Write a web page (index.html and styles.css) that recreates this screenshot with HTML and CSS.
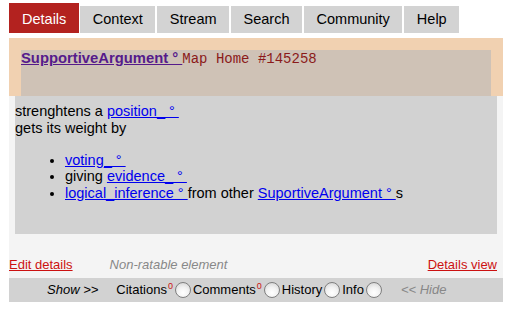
FILE: index.html
```html
<!DOCTYPE html>
<html>
<head>
<meta charset="utf-8">
<link rel="stylesheet" href="styles.css">
</head>
<body>
<div class="page">
  <div class="tabs">
    <div class="tab active">Details</div>
    <div class="tab">Context</div>
    <div class="tab">Stream</div>
    <div class="tab">Search</div>
    <div class="tab">Community</div>
    <div class="tab">Help</div>
  </div>
  <div class="header">
    <div class="header-inner">
      <a class="title" href="#">SupportiveArgument °&nbsp;</a><span class="mono">Map Home #145258</span>
    </div>
  </div>
  <div class="body">
    <div class="content">
      <div>strenghtens a <a class="lnk" href="#">position_ °&nbsp;</a></div>
      <div>gets its weight by</div>
      <ul class="list">
        <li><a class="lnk" href="#">voting_ °&nbsp;</a></li>
        <li>giving <a class="lnk" href="#">evidence_ °&nbsp;</a></li>
        <li><a class="lnk" href="#">logical_inference °&nbsp;</a>from other <a class="lnk" href="#">SuportiveArgument °&nbsp;</a>s</li>
      </ul>
    </div>
    <div class="links">
      <a class="red" href="#">Edit details</a>
      <span class="note">Non-ratable element</span>
      <a class="red right" href="#">Details view</a>
    </div>
  </div>
  <div class="bar">
    <span class="show">Show &gt;&gt;</span>
    <span class="item">Citations<sup>0</sup></span><span class="radio"></span>
    <span class="item">Comments<sup>0</sup></span><span class="radio"></span>
    <span class="item">History</span><span class="radio"></span>
    <span class="item">Info</span><span class="radio"></span>
    <span class="hide">&lt;&lt; Hide</span>
  </div>
</div>
</body>
</html>
```

FILE: styles.css
```css
html, body {
  margin: 0;
  padding: 0;
  background: #ffffff;
}
body {
  font-family: "Liberation Sans", Arial, Helvetica, sans-serif;
  font-size: 14.5px;
  line-height: 16.5px;
  color: #000;
}
.page {
  width: 494px;
  padding: 3px 0 0 9px;
}
.tabs {
  display: flex;
  align-items: flex-end;
  gap: 2px;
  height: 30px;
}
.tab {
  height: 27px;
  line-height: 27px;
  padding: 0 12.5px;
  background: #d3d3d3;
  color: #000;
}
.tab.active {
  height: 27px;
  padding: 3px 13px 0;
  background: #b3221f;
  color: #fff;
  margin-right: -1px;
}
.header {
  margin-top: 5px;
  background: #f1d1b1;
  padding: 12px 12px 0 12px;
}
.header-inner {
  height: 46px;
  background: #cfc2b6;
  line-height: 17px;
}
.title {
  font-weight: bold;
  font-size: 14.8px;
  color: #551a8b;
  text-decoration: underline;
}
.mono {
  font-family: "Liberation Mono", "Courier New", monospace;
  font-size: 14px;
  color: #8b1a1a;
}
.body {
  background: #f4f4f4;
}
.content {
  margin: 0 6px;
  background: #d2d2d2;
  height: 138px;
  box-sizing: border-box;
  padding-top: 7px;
}
.lnk {
  color: #0000ee;
  text-decoration: underline;
}
.list {
  margin: 15.5px 0 0 0;
  padding-left: 50px;
}
.links {
  display: flex;
  align-items: baseline;
  font-size: 13px;
  height: 17px;
  line-height: 17px;
  padding: 22px 6px 5px 0;
}
.red {
  color: #cc1111;
  text-decoration: underline;
}
.note {
  color: #888;
  font-style: italic;
  margin-left: 37px;
}
.right {
  margin-left: auto;
}
.bar {
  display: flex;
  align-items: center;
  height: 24px;
  font-size: 13px;
  background: #d2d2d2;
  padding-left: 38px;
}
.show {
  font-style: italic;
  margin-right: 18px;
}
.item sup {
  color: #cc1111;
  font-size: 9px;
  line-height: 0;
  vertical-align: 5px;
  margin-left: 1px;
}
.radio {
  display: inline-block;
  width: 16px;
  height: 16px;
  box-sizing: border-box;
  border: 1px solid #7f7f7f;
  border-radius: 50%;
  background: radial-gradient(circle at 50% 70%, #ffffff 0%, #f2f2f2 45%, #cfcfcf 100%);
  margin: 0 2px 0 2px;
}
.hide {
  color: #888;
  font-style: italic;
  margin-left: 17px;
}
```
